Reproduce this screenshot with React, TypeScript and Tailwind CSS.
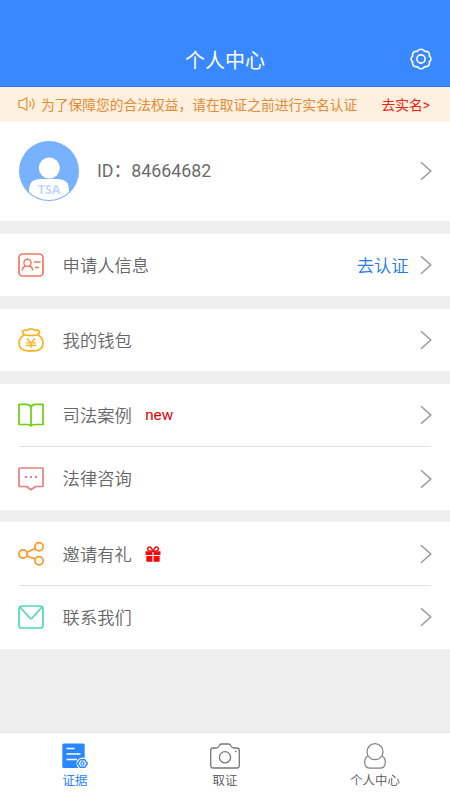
import type { ReactNode } from "react";

function Arrow() {
  return (
    <svg className="h-[20px] w-[12px] shrink-0" viewBox="0 0 12 20" fill="none" stroke="#959595" strokeWidth="1.4">
      <path d="M1 1.3 10.8 10 1 18.7" />
    </svg>
  );
}

function GearIcon() {
  return (
    <svg className="h-[22px] w-[22px]" viewBox="0 0 22 22" fill="none" stroke="#fff" strokeWidth="1.6" strokeLinejoin="round">
      <path d="M8.3 2.2Q11 .4 13.7 2.2Q14.3 3.7 15.8 3.3Q19 3.4 19.6 6.6Q18.8 8.2 20.2 9Q21.6 11 20.2 13Q18.8 13.8 19.6 15.4Q19 18.6 15.8 18.7Q14.3 18.3 13.7 19.8Q11 21.6 8.3 19.8Q7.7 18.3 6.2 18.7Q3 18.6 2.4 15.4Q3.2 13.8 1.8 13Q.4 11 1.8 9Q3.2 8.2 2.4 6.6Q3 3.4 6.2 3.3Q7.7 3.7 8.3 2.2Z" />
      <circle cx="11" cy="11" r="4.1" />
    </svg>
  );
}

function SpeakerIcon() {
  return (
    <svg className="h-[14px] w-[18px]" viewBox="0 0 18 14" fill="none" stroke="#e8913f" strokeWidth="1.2">
      <path d="M4 3.5H1v7h3M4 3.5 8.8.8v12.4L4 10.5M11.5 4Q13.5 7 11.5 10M14 1.8Q18.2 7 14 12.2" />
    </svg>
  );
}

function Avatar() {
  return (
    <svg className="h-[60px] w-[60px] shrink-0" viewBox="0 0 60 60">
      <defs>
        <clipPath id="avatar">
          <circle cx="30" cy="30" r="29" />
        </clipPath>
      </defs>
      <circle cx="30" cy="30" r="30" fill="#78b2ff" />
      <g clipPath="url(#avatar)" fill="#fff">
        <circle cx="30.3" cy="27" r="10.5" />
        <path d="M10 60V49Q10 38 22 38H38Q50 38 50 49V60Z" />
      </g>
      <text x="30" y="53" textAnchor="middle" fontSize="12.3" fontWeight="700" fill="#bed9ff" fontFamily="Open Sans, sans-serif">TSA</text>
    </svg>
  );
}

function MenuIcon({ color, children }: { color: string; children: ReactNode }) {
  return (
    <svg className="h-[26px] w-[26px] shrink-0" viewBox="0 0 26 26" fill="none" stroke={color} strokeWidth="1.7" strokeLinejoin="round">
      {children}
    </svg>
  );
}

function IdCardIcon() {
  return (
    <MenuIcon color="#f0785c">
      <rect x="1" y="2" width="24" height="22" rx="3.5" />
      <circle cx="9.5" cy="10.8" r="3.6" strokeWidth="1.4" />
      <path d="M4.2 18.5Q4.8 14.5 8 14M11 14Q14.2 14.5 14.7 18.5M16 10h6.5M17 15.5h4" strokeWidth="1.4" />
    </MenuIcon>
  );
}

function WalletIcon() {
  return (
    <MenuIcon color="#fcb11d">
      <path d="M7.5 8Q3.5 6.5 5 4.2Q6.3 2.4 9 3.5Q13 .2 17 3.5Q19.7 2.4 21 4.2Q22.5 6.5 18.5 8Q13 9 7.5 8Z" />
      <path d="M6.5 7.8Q1 11 1 16Q1 23.8 10 23.8H16Q25 23.8 25 16Q25 11 19.5 7.8" />
      <path d="M9 11.5 13 16l4-4.5M13 16v5M8 15.8h10M8 18.5h10" strokeWidth="1.3" />
    </MenuIcon>
  );
}

function BookIcon() {
  return (
    <MenuIcon color="#6bcf10">
      <path d="M13 5Q11.5 2.4 8.5 2.4H1V22.5H9Q11.5 22.5 13 23.8Q14.5 22.5 17 22.5H25V2.4H17.5Q14.5 2.4 13 5V23.5" />
    </MenuIcon>
  );
}

function ChatIcon() {
  return (
    <MenuIcon color="#ee7b7b">
      <path d="M2 2H24Q25 2 25 3V19.5Q25 20.5 24 20.5H17.5L13 23.7 8.5 20.5H2Q1 20.5 1 19.5V3Q1 2 2 2Z" />
      <path d="M7 11h2M12 11h2M17 11h2" strokeWidth="2" />
    </MenuIcon>
  );
}

function ShareIcon() {
  return (
    <MenuIcon color="#fb9820">
      <circle cx="5" cy="13" r="4.1" />
      <circle cx="21" cy="5.8" r="4.1" />
      <circle cx="21" cy="19.7" r="4.1" />
      <path d="M8.7 11.3 17.3 7.5M8.5 15 17.5 18" />
    </MenuIcon>
  );
}

function MailIcon() {
  return (
    <MenuIcon color="#51d9b5">
      <rect x="1" y="2" width="24" height="22" rx="2.8" />
      <path d="M2 3 11.8 14Q13 15.2 14.2 14L24 3" />
    </MenuIcon>
  );
}

function GiftIcon() {
  return (
    <svg className="h-[16px] w-[16px]" viewBox="0 0 16 16" fill="#f40909">
      <path d="M.5 5.2H7.4V9H.5ZM8.6 5.2H15.5V9H8.6ZM1.3 9.9H7.4V15.8H2.3Q1.3 15.8 1.3 14.8ZM8.6 9.9H14.7V14.8Q14.7 15.8 13.7 15.8H8.6Z" />
      <path d="M7.7 5.2Q2.6 5.2 2.6 2.9Q3.2.5 5 1Q7 2 7.7 5.2ZM8.3 5.2Q13.4 5.2 13.4 2.9Q12.8.5 11 1Q9 2 8.3 5.2Z" fill="none" stroke="#f40909" strokeWidth="1.5" />
    </svg>
  );
}

function EvidenceIcon() {
  return (
    <svg className="h-[26px] w-[26px]" viewBox="0 0 26 26">
      <rect x=".3" y=".5" width="22.4" height="24.5" rx="1.5" fill="#2987ff" />
      <path d="M4.5 5.5H12.5M4.5 11H18.5M4.5 16.5H15" stroke="#fff" strokeWidth="1.5" />
      <circle cx="20.5" cy="20.5" r="6" fill="#fff" />
      <path d="M18.2 16.7h4.6l2.5 3.8-2.5 3.8h-4.6l-2.5-3.8Z" fill="#fff" stroke="#2987ff" strokeWidth="1.4" strokeLinejoin="round" />
      <circle cx="20.5" cy="20.5" r="1.6" fill="none" stroke="#2987ff" strokeWidth="1.2" />
    </svg>
  );
}

function CameraIcon() {
  return (
    <svg className="h-[26px] w-[30px]" viewBox="0 0 30 26" fill="none" stroke="#777" strokeWidth="1.3" strokeLinejoin="round">
      <path d="M3 5H6Q8 5 9 3L9.7 2Q10.5 1 11.5 1H18.5Q19.5 1 20.3 2L21 3Q22 5 24 5H27Q29.3 5 29.3 7.3V22.5Q29.3 25 27 25H3Q.7 25 .7 22.5V7.3Q.7 5 3 5Z" />
      <circle cx="15" cy="14.3" r="5.6" />
      <path d="M25 8.5h1.6" strokeWidth="1.6" />
    </svg>
  );
}

function PersonIcon() {
  return (
    <svg className="h-[26px] w-[24px]" viewBox="0 0 24 26" fill="none" stroke="#808080" strokeWidth="1.2">
      <circle cx="12" cy="8.7" r="8" />
      <path d="M4.8 13Q1.7 15 1.7 19.5Q1.7 25.2 7.5 25.2H16.5Q22.3 25.2 22.3 19.5Q22.3 15 19.2 13" />
    </svg>
  );
}

type RowProps = {
  icon: ReactNode;
  label: string;
  badge?: ReactNode;
  action?: string;
};

function Row({ icon, label, badge, action }: RowProps) {
  return (
    <div className="flex h-[62.6px] items-center pr-[18px] pl-[18px]">
      {icon}
      <span className="ml-[18.6px] pt-[3.5px] text-[17.3px] text-[#666]">{label}</span>
      {badge && <span className="ml-[13.4px]">{badge}</span>}
      <span className="mr-[11.5px] ml-auto pt-[3.5px] text-[17.3px] text-[#2478ee]">{action}</span>
      <Arrow />
    </div>
  );
}

function Divider() {
  return <div className="mr-[19px] ml-[19px] h-px bg-[#e2e2e2]" />;
}

export default function App() {
  return (
    <div className="flex h-[800px] w-[450px] flex-col bg-[#efefef] font-[Roboto,'Noto_Sans_CJK_SC',sans-serif] font-[350]">
      <header className="flex h-[87px] items-end border-b border-[#2478ee] bg-[#3988ff] px-[18px] pb-[12px]">
        <div className="w-[22px]" />
        <h1 className="flex-1 text-center text-[20px] leading-[26px] font-normal text-white">个人中心</h1>
        <div className="pb-[4px]">
          <GearIcon />
        </div>
      </header>

      <div className="flex h-[34px] items-center bg-[#fff0df] pr-[20px] pl-[18px] text-[13.76px] font-normal">
        <SpeakerIcon />
        <span className="ml-[5px] pt-[2.5px] text-[#e48b35]">为了保障您的合法权益，请在取证之前进行实名认证</span>
        <span className="ml-auto pt-[2.5px] text-[#f02010]">去实名&gt;</span>
      </div>

      <section className="flex h-[100px] items-center bg-white pr-[18px] pl-[19px]">
        <Avatar />
        <span className="ml-[18px] flex-1 pt-px text-[17.8px] font-normal text-[#6c6c6c]">ID：84664682</span>
        <Arrow />
      </section>

      <main className="mt-[12.6px] flex flex-col gap-[12.5px]">
        <section className="bg-white">
          <Row icon={<IdCardIcon />} label="申请人信息" action="去认证" />
        </section>
        <section className="bg-white">
          <Row icon={<WalletIcon />} label="我的钱包" />
        </section>
        <section className="bg-white">
          <Row icon={<BookIcon />} label="司法案例" badge={<span className="text-[15.3px] font-normal text-[#e00000]">new</span>} />
          <Divider />
          <Row icon={<ChatIcon />} label="法律咨询" />
        </section>
        <section className="bg-white">
          <Row icon={<ShareIcon />} label="邀请有礼" badge={<GiftIcon />} />
          <Divider />
          <Row icon={<MailIcon />} label="联系我们" />
        </section>
      </main>

      <nav className="mt-auto grid h-[68px] grid-cols-3 border-t border-[#e4e4e4] bg-white pt-[10px] text-[12.4px] leading-[18px] text-[#555]">
        <div className="flex flex-col items-center gap-[3px] font-normal text-[#2987ff]">
          <EvidenceIcon />
          证据
        </div>
        <div className="flex flex-col items-center gap-[3px]">
          <CameraIcon />
          取证
        </div>
        <div className="flex flex-col items-center gap-[3px]">
          <PersonIcon />
          个人中心
        </div>
      </nav>
    </div>
  );
}
